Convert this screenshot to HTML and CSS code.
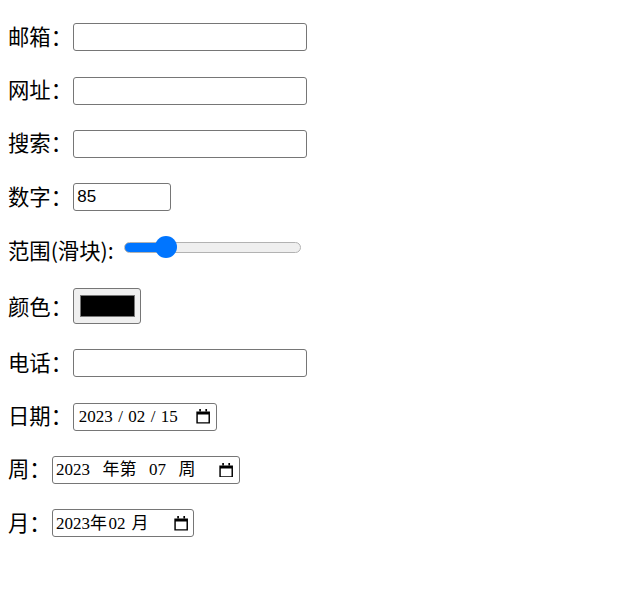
FILE: index.html
```html
<!DOCTYPE html>
<html lang="zh-CN">
<head>
<meta charset="utf-8">
<title>表单输入类型</title>
<link rel="stylesheet" href="styles.css">
</head>
<body>
<form class="form">
  <div class="row"><label class="lbl" for="email">邮箱：</label><input class="text" type="email" id="email"></div>
  <div class="row"><label class="lbl" for="url">网址：</label><input class="text" type="url" id="url"></div>
  <div class="row"><label class="lbl" for="search">搜索：</label><input class="text" type="search" id="search"></div>
  <div class="row"><label class="lbl" for="num">数字：</label><input class="text num" type="number" id="num" value="85"></div>
  <div class="row row-range"><label class="lbl" for="range">范围(滑块):</label><input class="range" type="range" id="range" min="0" max="100" value="20"></div>
  <div class="row row-color"><label class="lbl" for="color">颜色：</label><input class="color" type="color" id="color" value="#000000"></div>
  <div class="row"><label class="lbl" for="tel">电话：</label><input class="text" type="tel" id="tel"></div>
  <div class="row">
    <span class="lbl">日期：</span>
    <div class="picker date" role="group" aria-label="日期">
      <span class="val">2023<span class="sep">/</span>02<span class="sep">/</span>15</span>
      <svg class="cal" viewBox="0 0 14 15" aria-hidden="true"><path d="M3 0h1.7v2.6H3zM9.3 0H11v2.6H9.3z"/><path fill-rule="evenodd" d="M0 2.5h14V15H0zM1.5 5.6v7.9h11V5.6z"/></svg>
    </div>
  </div>
  <div class="row">
    <span class="lbl">周：</span>
    <div class="picker week" role="group" aria-label="周">
      <span class="val"><span class="seg">2023</span><span class="seg">年第</span><span class="seg">07</span><span class="seg">周</span></span>
      <svg class="cal" viewBox="0 0 14 15" aria-hidden="true"><path d="M3 0h1.7v2.6H3zM9.3 0H11v2.6H9.3z"/><path fill-rule="evenodd" d="M0 2.5h14V15H0zM1.5 5.6v7.9h11V5.6z"/></svg>
    </div>
  </div>
  <div class="row">
    <span class="lbl">月：</span>
    <div class="picker month" role="group" aria-label="月">
      <span class="val">2023<span class="m-y">年</span><span class="m-n">02</span><span class="m-m">月</span></span>
      <svg class="cal" viewBox="0 0 14 15" aria-hidden="true"><path d="M3 0h1.7v2.6H3zM9.3 0H11v2.6H9.3z"/><path fill-rule="evenodd" d="M0 2.5h14V15H0zM1.5 5.6v7.9h11V5.6z"/></svg>
    </div>
  </div>
</form>
</body>
</html>
```
FILE: styles.css
```css
html, body {
  margin: 0;
  padding: 0;
  background: #fff;
}

.form {
  display: flex;
  flex-direction: column;
  gap: 25.33px;
  padding: 23.3px 8px 0;
  font-family: "Noto Sans CJK SC", "Noto Sans", sans-serif;
  font-size: 21.33px;
  color: #000;
}

.row {
  display: flex;
  align-items: center;
  height: 28px;
}

.row-range { height: 26px; }
.row-color { height: 36px; }

.lbl {
  line-height: 1;
  white-space: nowrap;
  margin-bottom: 4px;
}

.row-range .lbl { margin-bottom: 0; }
.row-color .lbl { margin-bottom: 0; }

.text {
  box-sizing: border-box;
  width: 234px;
  height: 28px;
  margin: 0 0 0 1.3px;
  padding: 0 3px;
  border: 1px solid #767676;
  border-radius: 3px;
  background: #fff;
  font-family: "Liberation Sans", Arial, sans-serif;
  font-size: 17px;
  color: #000;
  outline: none;
}

.num { width: 98px; }

.range {
  -webkit-appearance: none;
  appearance: none;
  width: 177px;
  height: 22px;
  margin: 0 0 5px 10px;
  padding: 0;
  background: transparent;
}

.range::-webkit-slider-runnable-track {
  box-sizing: border-box;
  height: 11px;
  border-radius: 6px;
  border: 1px solid #b2b2b2;
  background: linear-gradient(90deg, #0075ff 0 42px, #efefef 42px);
}

.range::-webkit-slider-thumb {
  -webkit-appearance: none;
  appearance: none;
  width: 22px;
  height: 22px;
  margin-top: -6.5px;
  border: none;
  border-radius: 50%;
  background: #0075ff;
}

.color {
  -webkit-appearance: none;
  appearance: none;
  box-sizing: border-box;
  width: 68px;
  height: 36px;
  margin: 0 0 0 1.3px;
  padding: 0;
  border: 1px solid #767676;
  border-radius: 3px;
  background: #efefef;
}

.color::-webkit-color-swatch-wrapper {
  padding: 6.5px 5px 5.5px 5.5px;
}

.color::-webkit-color-swatch {
  border: 1px solid #777;
  border-radius: 0;
}

.picker {
  box-sizing: border-box;
  display: flex;
  align-items: center;
  justify-content: space-between;
  height: 28px;
  margin-left: 1.3px;
  padding: 0 6px 0 3px;
  border: 1px solid #767676;
  border-radius: 3px;
  background: #fff;
  font-family: "Liberation Serif", "Noto Sans CJK SC", serif;
  font-size: 17px;
  line-height: 1;
  color: #000;
}

.val {
  display: flex;
  align-items: baseline;
  white-space: nowrap;
}

.sep {
  display: inline-block;
  width: 15.5px;
  text-align: center;
}

.seg + .seg { margin-left: 12.5px; }

.m-n { margin-left: 1.5px; }
.m-m { margin-left: 6px; }

.cal {
  width: 14.3px;
  height: 14.6px;
  fill: #000;
  flex: none;
}

.date { width: 144px; padding-left: 4.5px; }
.week { width: 188px; }
.month { width: 142px; padding-right: 5px; }
```
